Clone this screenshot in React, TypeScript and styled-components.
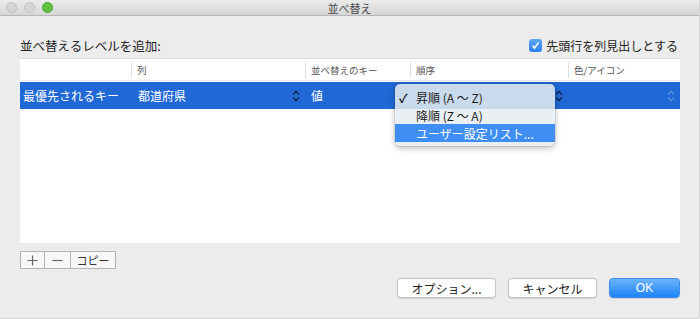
import React from "react";
import styled, { createGlobalStyle } from "styled-components";

const Global = createGlobalStyle`
  html, body { margin: 0; padding: 0; background: #ececec; }
  * { box-sizing: border-box; }
  body { font-family: "Noto Sans CJK JP", "Noto Sans", "Liberation Sans", sans-serif; }
`;

const Window = styled.div`
  width: 700px;
  height: 319px;
  background: #ececec;
  display: flex;
  flex-direction: column;
  overflow: hidden;
  border-right: 1px solid #d4d4d4;
  border-bottom: 1px solid #d4d4d4;
  border-bottom-right-radius: 4px;
`;

const TitleBar = styled.div`
  height: 16px;
  flex: none;
  position: relative;
  display: flex;
  align-items: center;
  padding-left: 6px;
  gap: 7px;
  background: linear-gradient(#ebebeb, #d6d6d6);
  border-bottom: 1px solid #b7b7b7;
`;

const Light = styled.span<{ $green?: boolean }>`
  width: 11px;
  height: 11px;
  border-radius: 50%;
  background: ${(p) => (p.$green ? "#5fc23f" : "#d5d5d5")};
  border: 1px solid ${(p) => (p.$green ? "#4aa92f" : "#c2c2c2")};
`;

const Title = styled.div`
  position: absolute;
  left: 0;
  right: 0;
  top: 0;
  bottom: 0;
  display: flex;
  align-items: center;
  justify-content: center;
  font-size: 11px;
  color: #4a4a4a;
  pointer-events: none;
`;

const Content = styled.div`
  flex: 1;
  display: flex;
  flex-direction: column;
  padding: 20px 19px 0 20px;
`;

const TopRow = styled.div`
  height: 18px;
  display: flex;
  align-items: center;
  justify-content: space-between;
  margin-bottom: 4px;
`;

const Label = styled.div`
  font-size: 12.5px;
  color: #222;
`;

const CheckWrap = styled.label`
  display: flex;
  align-items: center;
  gap: 4px;
  font-size: 12px;
  color: #222;
  margin-right: 2px;
`;

const CheckBox = styled.span`
  width: 13px;
  height: 13px;
  border-radius: 3px;
  background: linear-gradient(#5ea6f8, #2c81f0);
  display: flex;
  align-items: center;
  justify-content: center;
`;

const Table = styled.div`
  position: relative;
  height: 185px;
  background: #fff;
  border-top: 1px solid #dcdcdc;
  display: flex;
  flex-direction: column;
`;

const cols = "111px 174px 105px 158px 1fr";

const HeaderRow = styled.div`
  height: 22px;
  display: grid;
  grid-template-columns: ${cols};
  align-items: center;
  border-bottom: 1px solid #eaeaea;
`;

const HeaderCell = styled.div<{ $first?: boolean }>`
  height: 16px;
  font-size: 9.5px;
  color: #555;
  display: flex;
  align-items: center;
  padding-left: 5px;
  border-left: ${(p) => (p.$first ? "none" : "1px solid #e2e2e2")};
`;

const DataRow = styled.div`
  margin-top: 1px;
  height: 27px;
  display: grid;
  grid-template-columns: ${cols};
  align-items: center;
  background: #1f68d5;
  color: #fff;
  font-size: 12px;
`;

const Cell = styled.div<{ $pad?: number }>`
  display: flex;
  align-items: center;
  justify-content: space-between;
  padding-left: ${(p) => p.$pad ?? 6}px;
  padding-right: 5px;
  white-space: nowrap;
`;

const Menu = styled.div`
  position: absolute;
  left: 375px;
  top: 25px;
  width: 160px;
  height: 62px;
  border-radius: 5px;
  background: rgba(230, 236, 241, 0.86);
  box-shadow: 0 2px 6px rgba(0, 0, 0, 0.28), 0 0 0 0.5px rgba(0, 0, 0, 0.15);
  padding: 4px 0;
  display: flex;
  flex-direction: column;
`;

const MenuItem = styled.div<{ $active?: boolean }>`
  height: 18px;
  display: flex;
  align-items: center;
  font-size: 12px;
  color: ${(p) => (p.$active ? "#fff" : "#1c1c1c")};
  background: ${(p) => (p.$active ? "#3f8ef3" : "transparent")};
  padding-left: 4px;
`;

const Check = styled.span`
  width: 17px;
  font-size: 12px;
  font-weight: bold;
`;

const BottomBar = styled.div`
  margin-top: 8px;
  display: flex;
`;

const Seg = styled.div`
  display: flex;
  height: 18px;
  border: 1px solid #b3b3b3;
  background: #f7f7f7;
`;

const SegBtn = styled.div<{ $w: number; $last?: boolean }>`
  width: ${(p) => p.$w}px;
  display: flex;
  align-items: center;
  justify-content: center;
  font-size: 11px;
  color: #333;
  border-right: ${(p) => (p.$last ? "none" : "1px solid #b3b3b3")};
`;

const ButtonRow = styled.div`
  margin-top: 9px;
  display: flex;
  justify-content: flex-end;
  gap: 12px;
`;

const Button = styled.div<{ $w: number; $primary?: boolean }>`
  width: ${(p) => p.$w}px;
  height: 20px;
  border-radius: 4px;
  display: flex;
  align-items: center;
  justify-content: center;
  font-size: 12px;
  color: ${(p) => (p.$primary ? "#fff" : "#222")};
  background: ${(p) => (p.$primary ? "linear-gradient(#6cb4fb, #1d83f9)" : "#fff")};
  border: 1px solid ${(p) => (p.$primary ? "#3b8cf0" : "#c4c4c4")};
  box-shadow: 0 0.5px 1px rgba(0, 0, 0, 0.12);
  font-family: ${(p) => (p.$primary ? '"Liberation Sans", sans-serif' : "inherit")};
`;

const UpDown = ({ color }: { color: string }) => (
  <svg width="8" height="12" viewBox="0 0 8 12">
    <path d="M1 4.5 L4 1.5 L7 4.5" fill="none" stroke={color} strokeWidth="1.4" />
    <path d="M1 7.5 L4 10.5 L7 7.5" fill="none" stroke={color} strokeWidth="1.4" />
  </svg>
);

export default function App() {
  return (
    <>
      <Global />
      <Window>
        <TitleBar>
          <Light />
          <Light />
          <Light $green />
          <Title>並べ替え</Title>
        </TitleBar>
        <Content>
          <TopRow>
            <Label>並べ替えるレベルを追加:</Label>
            <CheckWrap>
              <CheckBox>
                <svg width="9" height="9" viewBox="0 0 9 9">
                  <path d="M1.5 4.8 L3.6 7 L7.5 1.6" fill="none" stroke="#fff" strokeWidth="1.6" />
                </svg>
              </CheckBox>
              先頭行を列見出しとする
            </CheckWrap>
          </TopRow>
          <Table>
            <HeaderRow>
              <HeaderCell $first />
              <HeaderCell>列</HeaderCell>
              <HeaderCell>並べ替えのキー</HeaderCell>
              <HeaderCell>順序</HeaderCell>
              <HeaderCell>色/アイコン</HeaderCell>
            </HeaderRow>
            <DataRow>
              <Cell $pad={3}>最優先されるキー</Cell>
              <Cell $pad={7}>
                都道府県
                <UpDown color="#13264a" />
              </Cell>
              <Cell>値</Cell>
              <Cell>
                <span />
                <UpDown color="#13264a" />
              </Cell>
              <Cell>
                <span />
                <UpDown color="#5a8ed8" />
              </Cell>
            </DataRow>
            <Menu>
              <MenuItem>
                <Check>✓</Check>昇順 (A 〜 Z)
              </MenuItem>
              <MenuItem>
                <Check />降順 (Z 〜 A)
              </MenuItem>
              <MenuItem $active>
                <Check />ユーザー設定リスト...
              </MenuItem>
            </Menu>
          </Table>
          <BottomBar>
            <Seg>
              <SegBtn $w={24}>
                <svg width="11" height="11" viewBox="0 0 11 11">
                  <path d="M5.5 0.5 V10.5 M0.5 5.5 H10.5" stroke="#666" strokeWidth="1.2" />
                </svg>
              </SegBtn>
              <SegBtn $w={26}>
                <svg width="11" height="11" viewBox="0 0 11 11">
                  <path d="M0.5 5.5 H10.5" stroke="#666" strokeWidth="1.2" />
                </svg>
              </SegBtn>
              <SegBtn $w={44} $last>
                コピー
              </SegBtn>
            </Seg>
          </BottomBar>
          <ButtonRow>
            <Button $w={99}>オプション...</Button>
            <Button $w={89}>キャンセル</Button>
            <Button $w={71} $primary>
              OK
            </Button>
          </ButtonRow>
        </Content>
      </Window>
    </>
  );
}
